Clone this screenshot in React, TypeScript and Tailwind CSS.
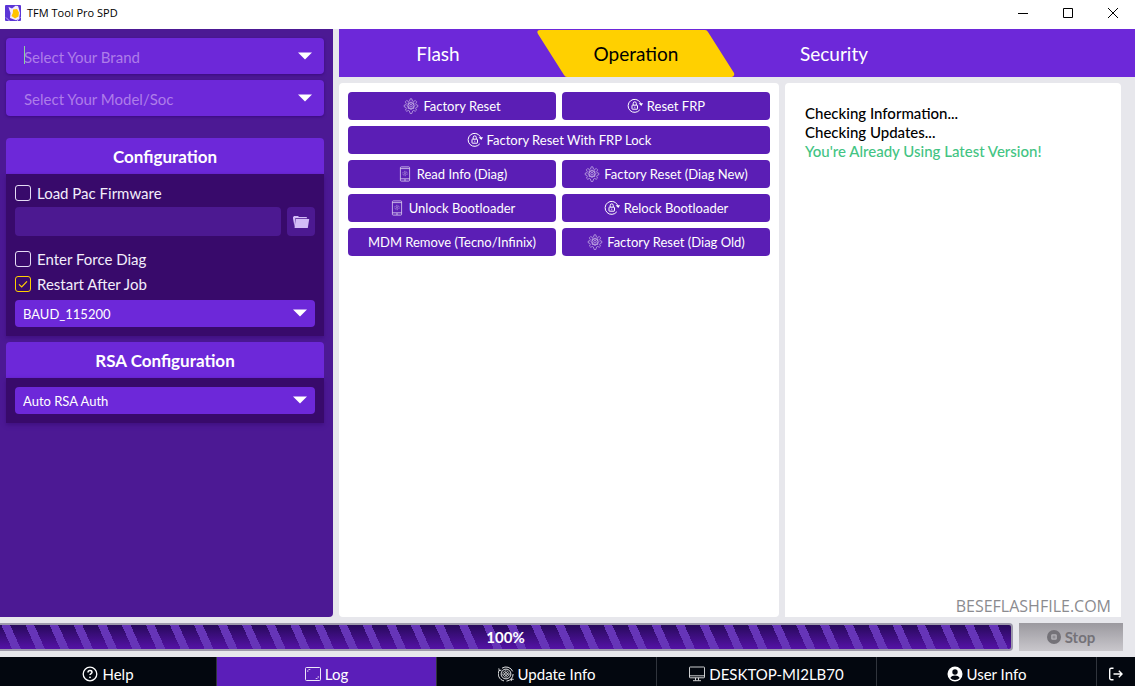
import React, { useState } from 'react';

type IconProps = { className?: string };

const GearIcon: React.FC<IconProps> = ({ className }) => (
  <svg className={className} viewBox="0 0 16 16" fill="none" stroke="currentColor" strokeWidth={0.6}>
    <path d="M6.600 3 7.200.8h1.600L9.400 3l1.300.5 1.600-1 1.400 1.400-1 1.600.5 1.300 1.600.4v1.600l-1.600.5-.5 1.300.8 1.500-1.300 1.200-1.500-.9-1 .5-.9 2.600H7.200l-.9-2.600-1-.5-1.500.9-1.300-1.200.8-1.500-.5-1.300L1.200 8.800V7.200l1.600-.4.500-1.300-1-1.600L3.700 2.500l1.600 1z" />
    <circle cx="8" cy="7.700" r="1.300" />
    <circle cx="8" cy="7.700" r="2.900" />
    <path d="m8 3.800 1.200 1.100 1.600-.1.100 1.600L12 7.700l-1.100 1.200-.1 1.600-1.600.1L8 11.700l-1.200-1.100-1.600-.1-.1-1.600L4 7.700l1.100-1.300.1-1.600 1.600.1z" />
  </svg>
);

const LockCycleIcon: React.FC<IconProps> = ({ className }) => (
  <svg className={className} viewBox="0 0 16 16" fill="none" stroke="currentColor" strokeWidth={1}>
    <path d="M12.800 11.800A6.500 6.500 0 1 1 13.200 4.500l.7 1.300" />
    <path d="M11.600 5.200H16l-1.700 2.700z" fill="currentColor" stroke="none" />
    <rect x="5" y="7.200" width="5.500" height="4" rx=".4" />
    <path d="M6.200 7V5.400a1.550 1.550 0 0 1 3.100 0V7M7.750 8.700v1" />
  </svg>
);

const PhoneIcon: React.FC<IconProps> = ({ className }) => (
  <svg className={className} viewBox="0 0 12 16" fill="none" stroke="currentColor" strokeWidth={0.8}>
    <rect x="1.400" y=".9" width="9.200" height="14.200" rx=".8" />
    <path d="M1.400 2.600h9.200M1.400 12.800h9.200" />
    <circle cx="6" cy="7.500" r="2.200" strokeWidth={0.5} strokeDasharray="1.500 .6" />
    <path d="M6 6.300v2.400M5 14h2" />
  </svg>
);

const FolderIcon: React.FC<IconProps> = ({ className }) => (
  <svg className={className} viewBox="0 0 18 14" fill="currentColor">
    <path d="M1 3.500V2.200L2 1h4l1 1h7.500l.8 1.200H3.200L2.600 12z" />
    <path d="M3.700 3.900h13.500L15.800 13H2.600z" />
  </svg>
);

const HelpIcon: React.FC<IconProps> = ({ className }) => (
  <svg className={className} viewBox="0 0 16 16" fill="none" stroke="currentColor" strokeWidth={1.3}>
    <circle cx="8" cy="8" r="6.800" />
    <path d="M6 6.500C6 5.300 6.800 4.600 8 4.600s2 .7 2 1.700c0 1.300-2 1.300-2 2.800" strokeWidth={1.500} />
    <circle cx="8" cy="11.300" r=".9" fill="currentColor" stroke="none" />
  </svg>
);

const LogIcon: React.FC<IconProps> = ({ className }) => (
  <svg className={className} viewBox="0 0 16 14" fill="none" stroke="currentColor" strokeWidth={0.9}>
    <rect x=".5" y=".5" width="15" height="13" rx="1" />
    <path d="M2.800 5V3.500l1-1h1.500M13.200 9v1.500l-1 1h-1.500" strokeWidth={0.700} />
  </svg>
);

const UpdateIcon: React.FC<IconProps> = ({ className }) => (
  <svg className={className} viewBox="0 0 16 16" fill="none" stroke="currentColor" strokeWidth={0.9}>
    <path d="M1.200 4.300A7.200 7.200 0 0 0 6 14.900M4 2.200A7.200 7.200 0 0 1 14.700 5.400M15.100 8A7.200 7.200 0 0 1 8.500 15.100" />
    <path d="M.8 2.400l.5 2.200 2.100-.5M15.600 13.400l-2.100-.4-.4 2.100" />
    <circle cx="8" cy="8" r="4.900" />
    <circle cx="8" cy="8" r="3.100" strokeDasharray="2 .5" />
    <circle cx="8" cy="8" r="1.400" />
  </svg>
);

const MonitorIcon: React.FC<IconProps> = ({ className }) => (
  <svg className={className} viewBox="0 0 16 15" fill="none" stroke="currentColor" strokeWidth={0.8}>
    <rect x=".5" y=".5" width="15" height="10.800" rx=".6" />
    <path d="M.5 9.300h15M6.500 11.300v2.500M9.500 11.300v2.500M4 14.200h8" />
  </svg>
);

const UserIcon: React.FC<IconProps> = ({ className }) => (
  <svg className={className} viewBox="0 0 16 16">
    <circle cx="8" cy="8" r="7.500" fill="currentColor" />
    <circle cx="8" cy="6" r="2.700" fill="#03070f" />
    <path d="M3.300 11.900c1.300-1.500 2.500-2.300 4.700-2.300s3.400.8 4.700 2.300A6.200 6.200 0 0 1 8 14a6.200 6.200 0 0 1-4.700-2.100z" fill="#03070f" />
  </svg>
);

const LogoutIcon: React.FC<IconProps> = ({ className }) => (
  <svg className={className} viewBox="0 0 16 14" fill="none" stroke="currentColor" strokeWidth={1.4}>
    <path d="M5.500 1.200H3.200a1.500 1.500 0 0 0-1.500 1.500v8.600a1.500 1.500 0 0 0 1.500 1.500h2.300M5.500 7h8.300M10.800 3.800 14 7l-3.200 3.200" />
  </svg>
);

const StopIcon: React.FC<IconProps> = ({ className }) => (
  <svg className={className} viewBox="0 0 16 16">
    <circle cx="8" cy="8" r="8" fill="currentColor" />
    <rect x="4.800" y="4.800" width="6.400" height="6.400" rx="1.500" fill="#b5b3b8" />
    <rect x="6.300" y="6.300" width="3.400" height="3.400" fill="#8f8d93" />
  </svg>
);

const AppIcon: React.FC<IconProps> = ({ className }) => (
  <svg className={className} viewBox="0 0 16 16">
    <rect width="16" height="16" rx="1" fill="#5b35d6" />
    <path d="M3.500 2 7 3.500 10.500.8 13 1l1 3 1 4-1 6-3 1.200L5 13 5.500 8z" fill="#f3ecff" />
    <path d="M8 4.500 12 4l2 3.500-.5 4-3.500 2L6.500 11l1.300-3z" fill="#ffc400" />
    <path d="M1 12.500 4.500 16M15.500 12 12 16" stroke="#d9c9ff" strokeWidth={0.8} />
  </svg>
);

const CaretDown: React.FC<IconProps> = ({ className }) => (
  <svg className={className} viewBox="0 0 14 8" fill="currentColor">
    <path d="M0 .5h14l-7 7z" />
  </svg>
);

const operations = [
  { label: 'Factory Reset', icon: GearIcon },
  { label: 'Reset FRP', icon: LockCycleIcon },
  { label: 'Factory Reset With FRP Lock', icon: LockCycleIcon, wide: true },
  { label: 'Read Info (Diag)', icon: PhoneIcon },
  { label: 'Factory Reset (Diag New)', icon: GearIcon },
  { label: 'Unlock Bootloader', icon: PhoneIcon },
  { label: 'Relock Bootloader', icon: LockCycleIcon },
  { label: 'MDM Remove (Tecno/Infinix)' },
  { label: 'Factory Reset (Diag Old)', icon: GearIcon },
];

const footerItems = [
  { label: 'Help', icon: HelpIcon },
  { label: 'Log', icon: LogIcon, active: true },
  { label: 'Update Info', icon: UpdateIcon },
  { label: 'DESKTOP-MI2LB70', icon: MonitorIcon },
  { label: 'User Info', icon: UserIcon },
];

const tabs = ['Flash', 'Operation', 'Security'];

const BigSelect: React.FC<{ label: string; focused?: boolean }> = ({ label, focused }) => (
  <div className="relative">
    <select
      aria-label={label}
      className="block w-full h-9 pt-0.5 pl-[18px] pr-10 appearance-none rounded bg-[#6d28d9] text-[#ad7de9] text-[15px] outline-none shadow-[0_1px_3px_#3a0a80]"
    >
      <option>{label}</option>
    </select>
    {focused && <span className="absolute left-[18px] top-2 w-px h-[18px] bg-[#8fd0a0]" />}
    <CaretDown className="absolute right-3 top-[14px] w-[14px] h-2 text-white pointer-events-none" />
  </div>
);

const SmallSelect: React.FC<{ label: string; value: string }> = ({ label, value }) => (
  <div className="relative">
    <select
      aria-label={label}
      className="block w-full h-[27px] pt-0.5 pl-2 pr-8 appearance-none rounded bg-[#6d28d9] text-white text-[13px] outline-none"
    >
      <option>{value}</option>
    </select>
    <CaretDown className="absolute right-2 top-[9px] w-[14px] h-2 text-white pointer-events-none" />
  </div>
);

const Check: React.FC<{ label: string; initial?: boolean }> = ({ label, initial = false }) => {
  const [checked, setChecked] = useState(initial);
  return (
    <label className="flex items-center gap-1.5 h-[25px] text-[15px] text-[#f3eefb]">
      <span className="relative flex">
        <input
          type="checkbox"
          checked={checked}
          onChange={(e) => setChecked(e.target.checked)}
          className="appearance-none w-4 h-4 rounded-[3px] border border-[#e5dcf5] checked:border-[#ffd000]"
        />
        {checked && (
          <svg className="absolute inset-0 w-4 h-4 text-[#ffd000] pointer-events-none" viewBox="0 0 16 16" fill="none" stroke="currentColor" strokeWidth={1.2}>
            <path d="m4 8.300 2.700 2.700L12 5.300" />
          </svg>
        )}
      </span>
      <span className="pt-0.5">{label}</span>
    </label>
  );
};

const App: React.FC = () => {
  const [tab, setTab] = useState('Operation');
  const [path, setPath] = useState('');

  return (
    <div className="h-screen flex flex-col bg-[#e7e7ec] font-[Lato,'Open_Sans',sans-serif] overflow-hidden">
      <header className="h-[29px] shrink-0 flex items-center justify-between bg-white">
        <div className="flex items-center gap-1.5 pl-[5px] pb-[3px]">
          <AppIcon className="w-4 h-4" />
          <h1 className="text-[11px] text-black font-['Open_Sans',sans-serif]">TFM Tool Pro SPD</h1>
        </div>
        <div className="flex h-full pb-[3px] text-black">
          <button aria-label="Minimize" className="w-[45px] flex items-center justify-center">
            <svg className="w-[10px] h-[10px]" viewBox="0 0 10 10" stroke="currentColor"><path d="M0 5.500h10" /></svg>
          </button>
          <button aria-label="Maximize" className="w-[45px] flex items-center justify-center">
            <svg className="w-[10px] h-[10px]" viewBox="0 0 10 10" fill="none" stroke="currentColor"><path d="M.5.5h9v9h-9z" /></svg>
          </button>
          <button aria-label="Close" className="w-[45px] flex items-center justify-center">
            <svg className="w-[10px] h-[10px]" viewBox="0 0 10 10" stroke="currentColor"><path d="m0 0 10 10M10 0 0 10" /></svg>
          </button>
        </div>
      </header>

      <main className="flex-1 min-h-0 flex gap-1.5">
        <aside className="w-[333px] shrink-0 bg-[#4c1994] rounded-br pl-1.5 pr-[9px] pt-[9px]">
          <div className="flex flex-col gap-1.5">
            <BigSelect label="Select Your Brand" focused />
            <BigSelect label="Select Your Model/Soc" />
          </div>

          <section className="mt-[22px]">
            <h2 className="h-9 pt-0.5 flex items-center justify-center rounded-t bg-[#6d28d9] text-white text-[17px] font-bold">Configuration</h2>
            <div className="bg-[#380a6b] px-[9px] pt-1.5 pb-[9px] shadow-[0_2px_4px_#3f1080]">
              <Check label="Load Pac Firmware" />
              <div className="flex gap-1.5 mt-0.5 mb-[10px]">
                <input
                  type="text"
                  aria-label="Pac firmware path"
                  value={path}
                  onChange={(e) => setPath(e.target.value)}
                  className="flex-1 min-w-0 h-[29px] px-2 rounded bg-[#4c1991] text-white text-[13px] outline-none"
                />
                <button aria-label="Browse" className="w-7 h-[29px] rounded bg-[#4c1991] flex items-center justify-center text-[#d3bdf7]">
                  <FolderIcon className="w-[18px] h-[14px]" />
                </button>
              </div>
              <Check label="Enter Force Diag" />
              <Check label="Restart After Job" initial />
              <div className="mt-1">
                <SmallSelect label="Baud rate" value="BAUD_115200" />
              </div>
            </div>
          </section>

          <section className="mt-1.5">
            <h2 className="h-9 pt-0.5 flex items-center justify-center rounded-t bg-[#6d28d9] text-white text-[17px] font-bold">RSA Configuration</h2>
            <div className="bg-[#380a6b] p-[9px] shadow-[0_2px_4px_#3f1080]">
              <SmallSelect label="RSA authentication" value="Auto RSA Auth" />
            </div>
          </section>
        </aside>

        <div className="flex-1 min-w-0 flex flex-col gap-1.5">
          <nav className="h-12 shrink-0 flex bg-[#6d28d9]">
            {tabs.map((name) => (
              <button
                key={name}
                onClick={() => setTab(name)}
                className={`relative w-[198px] pt-0.5 flex items-center justify-center text-[19px] ${name === tab ? 'text-black' : 'text-white'}`}
              >
                {name === tab && (
                  <svg className="absolute inset-0 w-full h-full text-[#ffd000]" viewBox="0 0 198 48" fill="currentColor" preserveAspectRatio="none">
                    <path d="M3 1h165q2 0 3 2l26 41q1 3-2 4H30q-2 0-3-2L1 5Q-1 1 3 1z" />
                  </svg>
                )}
                <span className="relative">{name}</span>
              </button>
            ))}
          </nav>

          <div className="flex-1 min-h-0 grid grid-cols-[440fr_336fr] gap-1.5 pr-[14px]">
            <section className="bg-white rounded p-[9px]">
              <div className="grid grid-cols-2 gap-1.5">
                {operations.map(({ label, icon: Icon, wide }) => (
                  <button
                    key={label}
                    className={`h-7 rounded bg-[#5b1eb5] hover:bg-[#6d28d9] text-white text-[13px] flex items-center justify-center gap-1 ${wide ? 'col-span-2' : ''}`}
                  >
                    {Icon && <Icon className={`w-4 h-4 ${Icon === LockCycleIcon ? '' : 'opacity-80'}`} />}
                    <span className="pt-0.5">{label}</span>
                  </button>
                ))}
              </div>
            </section>

            <section className="bg-white rounded-t px-5 pt-[21px] flex flex-col justify-between">
              <div className="text-[15px] leading-[19px] font-medium text-black">
                <p>Checking Information...</p>
                <p>Checking Updates...</p>
                <p className="text-[#43c483]">You're Already Using Latest Version!</p>
              </div>
              <p className="-mr-[10px] text-right text-base leading-[22px] text-[#8b8b8f] font-['Open_Sans',sans-serif]">BESEFLASHFILE.COM</p>
            </section>
          </div>
        </div>
      </main>

      <div className="h-10 shrink-0 flex items-center gap-1.5 pr-3">
        <div
          role="progressbar"
          aria-label="Progress"
          aria-valuenow={100}
          className="flex-1 h-7 border-y-2 border-r-2 border-[#9d99ab] rounded-r-sm flex items-center justify-center text-white text-[15px] font-bold bg-[repeating-linear-gradient(66deg,transparent_0px,transparent_11px,#6635b8_11px,#6635b8_19px,transparent_19px,transparent_22px),linear-gradient(to_bottom,#280a5c,#5412a6)]"
        >
          100%
        </div>
        <button disabled className="w-[104px] h-7 flex items-center justify-center gap-1 text-[15px] font-bold text-[#747278] bg-linear-to-b from-[#9b999f] to-[#c9c7cc]">
          <StopIcon className="w-[14px] h-[14px]" />
          Stop
        </button>
      </div>

      <footer className="h-[29px] shrink-0 grid grid-cols-[217fr_220fr_220fr_220fr_220fr_38fr] bg-[#03070f] text-white">
        {footerItems.map(({ label, icon: Icon, active }) => (
          <button
            key={label}
            className={`flex items-center justify-center gap-1 pt-1 text-[15px] border-r border-[#30343c] ${active ? 'bg-[#5b1eb9]' : ''}`}
          >
            <Icon className="w-4 h-4" />
            <span className="pt-0.5">{label}</span>
          </button>
        ))}
        <button aria-label="Log out" className="flex items-center justify-center pt-1">
          <LogoutIcon className="w-4 h-[14px]" />
        </button>
      </footer>
    </div>
  );
};

export default App;
